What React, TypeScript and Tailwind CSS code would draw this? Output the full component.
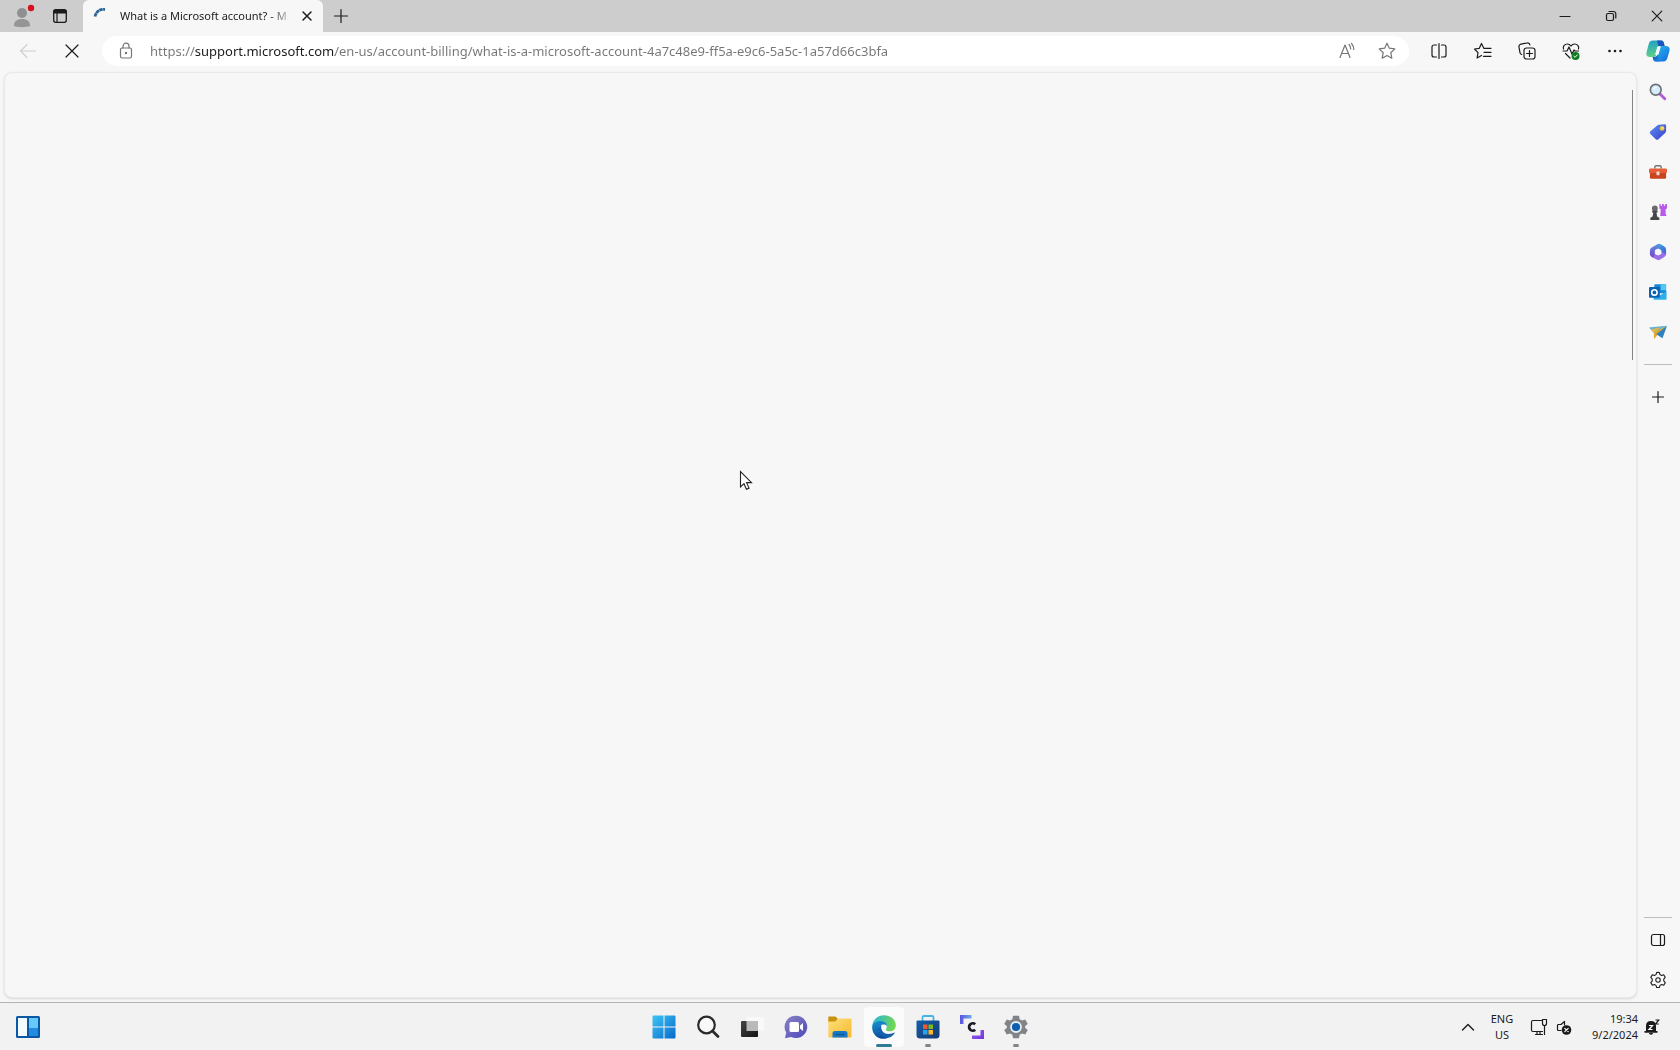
import React, { useState } from "react";

type IconProps = { className?: string; children: React.ReactNode; box?: number };

function Line({ className = "size-5", children, box = 20 }: IconProps) {
  return (
    <svg
      viewBox={`0 0 ${box} ${box}`}
      className={className}
      fill="none"
      stroke="currentColor"
      strokeWidth="1.2"
      strokeLinecap="round"
      strokeLinejoin="round"
      aria-hidden="true"
    >
      {children}
    </svg>
  );
}

function Art({ className = "size-5", children, box = 20 }: IconProps) {
  return (
    <svg viewBox={`0 0 ${box} ${box}`} className={className} fill="none" aria-hidden="true">
      {children}
    </svg>
  );
}

function Gradient({ id, from, to, x2 = 1, y2 = 1 }: { id: string; from: string; to: string; x2?: number; y2?: number }) {
  return (
    <linearGradient id={id} x1="0" y1="0" x2={x2} y2={y2}>
      <stop stopColor={from} />
      <stop offset="1" stopColor={to} />
    </linearGradient>
  );
}

function IconButton({ label, className, children }: { label: string; className: string; children: React.ReactNode }) {
  return (
    <button type="button" aria-label={label} className={`flex shrink-0 items-center justify-center ${className}`}>
      {children}
    </button>
  );
}

function TabStrip() {
  return (
    <header className="flex h-8 shrink-0 bg-[#cdcdcd] text-[#1b1b1b]">
      <div className="flex w-[83px] shrink-0 items-center rounded-br-md pl-2">
        <IconButton label="Profile" className="h-8 w-8">
          <Art className="size-6" box={24}>
            <circle cx="10" cy="9" r="5" fill="#8f8f8f" />
            <path d="M2 22c0-5 3-7 8-7s8 2 8 7c-3 1.500-13 1.500-16 0z" fill="#959595" />
            <circle cx="19" cy="4" r="3.200" fill="#d5101f" />
          </Art>
        </IconButton>
        <IconButton label="Tab actions" className="h-8 w-10">
          <Line className="size-4" box={16}>
            <rect x="1.700" y="1.700" width="12.600" height="12.600" rx="2" strokeWidth="1.300" />
            <path d="M2 2.500h12v2.500H2z" fill="currentColor" />
            <path d="M5 5v9" />
          </Line>
        </IconButton>
      </div>
      <div className="flex w-60 shrink-0 items-center rounded-t-md bg-[#f7f7f7] pl-2">
        <Art className="mr-2 size-5 shrink-0">
          <path d="M4 10.500Q6 2.700 14 3.500" stroke="#2b6496" strokeWidth="2.800" strokeDasharray="3.500 .4" />
        </Art>
        <span className="ml-px w-[175px] overflow-hidden text-[11px] leading-4 whitespace-nowrap [mask-image:linear-gradient(to_right,black_150px,transparent_174px)]">
          What is a Microsoft account? - M
        </span>
        <IconButton label="Close tab" className="h-8 w-6">
          <Line className="size-3" box={12}>
            <path d="M2 2l8 8M10 2l-8 8" strokeWidth="1.500" />
          </Line>
        </IconButton>
      </div>
      <IconButton label="New tab" className="h-8 w-9">
        <Line className="size-4" box={16}>
          <path d="M8 1.500v13M1.500 8h13" />
        </Line>
      </IconButton>
      <div className="ml-auto flex">
        <IconButton label="Minimize" className="h-8 w-[46px]">
          <Line className="size-3" box={12}>
            <path d="M1 6.500h10" />
          </Line>
        </IconButton>
        <IconButton label="Restore" className="h-8 w-[46px]">
          <Line className="size-3" box={12}>
            <rect x="1.500" y="3.500" width="7" height="7" rx="1.500" />
            <path d="M4 1.500h4.500a2.300 2.300 0 0 1 2.300 2.300V8" />
          </Line>
        </IconButton>
        <IconButton label="Close window" className="h-8 w-[46px]">
          <Line className="size-3" box={12}>
            <path d="M1.200 1.200l9.600 9.600M10.800 1.200l-9.600 9.600" />
          </Line>
        </IconButton>
      </div>
    </header>
  );
}

function Toolbar() {
  const [url, setUrl] = useState(
    "https://support.microsoft.com/en-us/account-billing/what-is-a-microsoft-account-4a7c48e9-ff5a-e9c6-5a5c-1a57d66c3bfa",
  );
  return (
    <div className="flex h-9 shrink-0 items-center pt-0.5 text-[#1b1b1b]">
      <IconButton label="Back" className="ml-1 h-8 w-12 text-[#d0d0d0]">
        <Line>
          <path d="M17.500 10h-15M9 3.500L2.500 10 9 16.500" />
        </Line>
      </IconButton>
      <IconButton label="Stop loading" className="h-8 w-10">
        <Line className="size-4" box={16}>
          <path d="M2 2l12 12M14 2L2 14" />
        </Line>
      </IconButton>
      <div className="ml-2.5 flex h-[30px] grow items-center rounded-full bg-white text-[#767676]">
        <IconButton label="View site information" className="h-7 w-12">
          <Line className="size-[18px]" box={18}>
            <rect x="3.500" y="6" width="11" height="10" rx="1.500" />
            <path d="M6 6V4.200a3 3 0 0 1 6 0V6" />
            <circle cx="9" cy="11" r=".6" fill="currentColor" />
          </Line>
        </IconButton>
        <input
          aria-label="Address bar"
          value={url}
          onChange={(e) => setUrl(e.target.value)}
          spellCheck={false}
          className="min-w-0 grow bg-[linear-gradient(to_right,#767676_45px,#1b1b1b_45px,#1b1b1b_185px,#767676_185px)] bg-clip-text text-[13px] leading-6 text-transparent outline-none"
        />
        <IconButton label="Read aloud" className="h-7 w-10">
          <Line>
            <path d="M3 16.500L8 4l5 12.500M4.700 12.500h6.600M12 3.500q1.700 1.800 1.700 4.500M14.500 2.500q2.300 2.500 2.300 6" />
          </Line>
        </IconButton>
        <IconButton label="Add to favorites" className="mr-0.5 h-7 w-10">
          <Line>
            <path d="M10 2.200l2.300 5 5.500.7-4 3.800 1 5.500-4.800-2.700-4.800 2.700 1-5.500-4-3.800 5.500-.7z" />
          </Line>
        </IconButton>
      </div>
      <div className="flex pl-2">
        <IconButton label="Split screen" className="h-8 w-11">
          <Line>
            <path d="M7.500 4H5a2 2 0 0 0-2 2v8a2 2 0 0 0 2 2h2.500M12.500 4H15a2 2 0 0 1 2 2v8a2 2 0 0 1-2 2h-2.500M10 2.500v15" />
          </Line>
        </IconButton>
        <IconButton label="Favorites" className="h-8 w-11">
          <Line>
            <path d="M11 7.300h-.2L8.500 2.500 6.300 7.300 1.500 8l3.500 3.700-.9 5.300 4.400-2.500M8.500 2.500l2.300 4.800H18M11 11.300h7M10.500 15.300H18" />
          </Line>
        </IconButton>
        <IconButton label="Collections" className="h-8 w-11">
          <Line>
            <rect x="7" y="7" width="11" height="11" rx="2.500" />
            <path d="M12.500 9.500v6M9.500 12.500h6M4.700 13.500A2.500 2.500 0 0 1 3 11.800L2 6.200a2.500 2.500 0 0 1 2-3l6.200-1.200a2.500 2.500 0 0 1 2.800 2" />
          </Line>
        </IconButton>
        <IconButton label="Browser essentials" className="h-8 w-11">
          <Line>
            <path d="M2.500 8C1.500 5 4 3 6.300 3S9.500 4.300 10 5c.5-.7 1.500-2 3.700-2S18.500 5 17.500 8M2 10h4l2-4 3 7 2-4 1 1h3.500M4.500 12.500L9 17" />
            <circle cx="14.500" cy="15" r="4" fill="#0e7a22" stroke="none" />
            <path d="M12.800 15.200l1.200 1.200 2.300-2.500" stroke="white" strokeWidth="1" />
          </Line>
        </IconButton>
        <IconButton label="Settings and more" className="h-8 w-11">
          <Line>
            <g fill="currentColor" stroke="none">
              <circle cx="4.500" cy="10" r="1.300" />
              <circle cx="10" cy="10" r="1.300" />
              <circle cx="15.500" cy="10" r="1.300" />
            </g>
          </Line>
        </IconButton>
      </div>
    </div>
  );
}

function CopilotIcon() {
  return (
    <Art className="size-6" box={24}>
      <defs>
        <Gradient id="cpa" from="#1f9fc4" to="#5fd08a" x2={0.1} />
        <Gradient id="cpb" from="#2cc0f0" to="#1368dc" />
        <Gradient id="cpc" from="#1c4fbe" to="#1d8fe9" />
      </defs>
      <path d="M7 1.500h8c2 0 2.500 1 3 3l.6 2.500h-3c-2 0-2.800 1-3.300 2.700L10.500 16c-.4 1.300-1 2-2.500 2H4c-3 0-4.200-2-3.400-5l2-7.500C3.300 2.500 4.500 1.500 7 1.500z" fill="url(#cpa)" />
      <path d="M11 1.500h4c2 0 2.500 1 3 3l.6 2.500h-3c-2 0-2.600.7-3 1.500z" fill="#1c55bd" />
      <path d="M17 22.500H10c-2 0-2.600-1-3-3l-.3-1.500h2c2 0 2.500-1 3-2.700L13.500 9c.5-1.500 1.300-2 2.700-2H20c3 0 4.200 2 3.400 5l-2 7c-.8 2.500-2 3.500-4.400 3.500z" fill="url(#cpb)" />
      <path d="M6.700 18h2c2 0 2.500-1 3-2.700l.6 3.700c.3 2 1 3.500 2.700 3.500h-5c-2 0-2.800-1.500-3.300-4.500z" fill="url(#cpc)" />
      <path d="M11.800 7.800h2.400l-2.200 7.700H9.600z" fill="#f3fbff" stroke="#f3fbff" strokeWidth="1" strokeLinejoin="round" />
    </Art>
  );
}

const sidebarApps: { label: string; icon: React.ReactNode }[] = [
  {
    label: "Search",
    icon: (
      <Art className="size-[18px]">
        <path d="M12.500 12.500l5 5" stroke="#b35bd6" strokeWidth="3.200" strokeLinecap="round" />
        <circle cx="7.500" cy="7.500" r="6" fill="#d3edfb" stroke="#6c7075" strokeWidth="1.800" />
        <path d="M5 7q1-2.500 3.500-2.500" stroke="white" strokeWidth="1.300" />
      </Art>
    ),
  },
  {
    label: "Shopping",
    icon: (
      <Art className="size-[18px]">
        <defs><Gradient id="tag" from="#5a8df5" to="#3b42c9" /></defs>
        <path d="M11 2l6.500-.5Q19 1.500 19 3v6q0 1-.8 1.800L10.500 18q-1.500 1.300-3 0l-6-5.700q-1.300-1.500 0-3L9.500 2.600Q10 2 11 2z" fill="url(#tag)" />
        <circle cx="14.500" cy="6" r="2.700" fill="#e5c04b" />
        <circle cx="15" cy="5.500" r="1" fill="#fff3ac" />
      </Art>
    ),
  },
  {
    label: "Tools",
    icon: (
      <Art className="size-[18px]">
        <path d="M6.500 6V4.500Q6.500 3 8 3h4q1.500 0 1.500 1.500V6" stroke="#70777c" strokeWidth="1.600" />
        <rect x="0" y="6" width="20" height="5.500" rx="1.500" fill="#e55e36" />
        <path d="M1 11h18v5q0 1.500-1.500 1.500h-15Q1 17.500 1 16z" fill="#c9451f" />
        <rect x="8.300" y="9.500" width="3.400" height="4" rx=".8" fill="#e8ddd6" />
      </Art>
    ),
  },
  {
    label: "Games",
    icon: (
      <Art className="size-[18px]">
        <path d="M11.500 1H13v2h1.500V1h2v2H18V1h2v5l-1.500 1v5l1 2.500h-7L13 7l-1.500-1z" fill="#b85be6" />
        <circle cx="6.500" cy="6" r="3.200" fill="#6a6a6e" />
        <path d="M3.500 8.500h6v2H8.300L9 15l2.500 1.500V19h-10v-2.500L4 15l.8-4.500H3.500z" fill="#46464a" />
      </Art>
    ),
  },
  {
    label: "Microsoft 365",
    icon: (
      <Art className="size-[18px]">
        <defs>
          <Gradient id="ma" from="#3cb5e8" to="#4457cf" />
          <Gradient id="mb" from="#5f8fd9" to="#7a45cf" y2={1} x2={0} />
        </defs>
        <path d="M10 1q1.500-.5 3 .5l4 2.500Q19 5.200 19 7.500v5.700L13.700 10V8L10 6 6.500 8z" fill="url(#ma)" />
        <path d="M10 1L3 5Q1 6.300 1 8.500V12q0 2.500 2 3.500l1.500.8L6.500 15V8l4-2.700z" fill="url(#mb)" />
        <path d="M4 16l5 2.500q1.500.8 3 0l5-3q2-1 2-3.500l-5.300-1.800v2L10 14l-3.500-2v3z" fill="#9a6fe6" />
        <circle cx="10" cy="10" r="3.300" fill="#f4f6ff" />
      </Art>
    ),
  },
  {
    label: "Outlook",
    icon: (
      <Art className="size-[18px]">
        <rect x="6" y="1.500" width="13" height="10" rx="1" fill="#1789d4" />
        <path d="M13 1.500h6V8h-6z" fill="#52c8f3" />
        <path d="M5 9l7.500 4.500L19.500 9v8.500q0 1-1 1H6q-1 0-1-1z" fill="#2faee9" />
        <rect x="0" y="4.500" width="12" height="12" rx="1.200" fill="#0862b5" />
        <circle cx="6" cy="10.500" r="3" stroke="white" strokeWidth="1.800" />
      </Art>
    ),
  },
  {
    label: "Drop",
    icon: (
      <Art className="size-[18px]">
        <path d="M0 5L20 3 5.500 11z" fill="#5aaee0" />
        <path d="M20 3L5.500 10.500V18l3.500-4.500z" fill="#e3a629" />
        <path d="M20 3L8 12.500l7 4.500z" fill="#2f82c2" />
        <path d="M2 7l12-2.500L5.500 11z" fill="#dfb648" />
      </Art>
    ),
  },
];

const gearPath =
  "M10 1.500l1.500.2.700 2.300 1.800 1 2.300-.8 1.700 2.800L16.400 9v2l1.700 1.900-1.700 2.900-2.400-.8-1.800 1-.7 2.300h-3L7.800 16 6 15l-2.300.8-1.700-2.900L3.600 11V9L2 7.100l1.700-2.900L6 5l1.800-1 .7-2.300z";

function Sidebar() {
  return (
    <aside aria-label="Sidebar" className="flex w-[43px] shrink-0 flex-col items-center pr-0.5 text-[#1b1b1b]">
      <IconButton label="Copilot" className="h-10 w-10 pb-0.5">
        <CopilotIcon />
      </IconButton>
      {sidebarApps.map((app) => (
        <IconButton key={app.label} label={app.label} className="h-10 w-10">
          {app.icon}
        </IconButton>
      ))}
      <hr className="mt-3 w-7 border-[#bdbdbd]" />
      <IconButton label="Customize" className="mt-3 h-10 w-10">
        <Line className="size-4" box={16}>
          <path d="M8 2.500v11M2.500 8h11" />
        </Line>
      </IconButton>
      <hr className="mt-auto w-7 border-[#bdbdbd]" />
      <IconButton label="Hide sidebar" className="mt-0.5 h-10 w-10">
        <Line className="size-4" box={16}>
          <rect x="1.500" y="2.500" width="13" height="11" rx="2" />
          <path d="M10.500 2.500v11" />
        </Line>
      </IconButton>
      <IconButton label="Sidebar settings" className="mb-0.5 h-10 w-10">
        <Line className="size-[18px]">
          <path d={gearPath} />
          <circle cx="10" cy="10" r="2.500" />
        </Line>
      </IconButton>
    </aside>
  );
}

type TaskApp = { label: string; state?: "active" | "open"; icon: React.ReactNode };

const taskApps: TaskApp[] = [
  {
    label: "Start",
    icon: (
      <Art className="size-6" box={24}>
        <defs><Gradient id="win" from="#3ec5f7" to="#0869c9" /></defs>
        <path d="M1.500.5H11.500V11.500H.5V1.500Q.5.5 1.500.5zM12.500.5h10q1 0 1 1v10h-11zM.5 12.500h11v11h-10q-1 0-1-1zM12.500 12.500h11v10q0 1-1 1h-10z" fill="url(#win)" />
      </Art>
    ),
  },
  {
    label: "Search",
    icon: (
      <Art className="size-6" box={24}>
        <circle cx="10.500" cy="10" r="8.300" fill="#f8f8f8" stroke="#2a2a2a" strokeWidth="2.200" />
        <path d="M16.500 16l5.500 5.500" stroke="#2a2a2a" strokeWidth="2.800" strokeLinecap="round" />
      </Art>
    ),
  },
  {
    label: "Task view",
    icon: (
      <Art className="size-6" box={24}>
        <defs><Gradient id="tv" from="#444" to="#151515" /></defs>
        <rect x="6" y="2" width="18" height="14" rx="1" fill="#f9f9f9" />
        <rect x="1" y="6" width="17" height="16" rx="1" fill="url(#tv)" />
        <path d="M6.500 6H18v10H6.500z" fill="#b9b9b9" />
      </Art>
    ),
  },
  {
    label: "Chat",
    icon: (
      <Art className="size-6" box={24}>
        <defs><Gradient id="chat" from="#8a83c4" to="#4d49bb" /></defs>
        <path d="M12 .7a11.200 11.200 0 1 1-4.800 21.300L1 23.300l1.200-5.700A11.200 11.200 0 0 1 12 .7z" fill="url(#chat)" />
        <rect x="5.500" y="7" width="9.500" height="10" rx="1.500" fill="white" />
        <path d="M16 10.500l3-2.500v8l-3-2.500z" fill="white" />
      </Art>
    ),
  },
  {
    label: "File Explorer",
    icon: (
      <Art className="size-6" box={24}>
        <defs><Gradient id="fold" from="#fee07c" to="#f5b92e" /></defs>
        <path d="M1 1.500h6.500L10 4v4H.3V2.500Q.3 1.500 1 1.500z" fill="#c8920e" />
        <path d="M.3 6.500h7L10 3.500h12.500q1 0 1 1v17q0 1-1 1H1.300q-1 0-1-1z" fill="url(#fold)" />
        <path d="M4.500 22.500v-4.300Q4.500 16 7 16h10q2.500 0 2.500 2.200v4.300z" fill="#1678c4" />
        <path d="M7.500 19.500h9" stroke="#0f5695" strokeWidth="1.500" />
      </Art>
    ),
  },
  {
    label: "Microsoft Edge",
    state: "active",
    icon: (
      <Art className="size-6" box={24}>
        <defs>
          <Gradient id="eda" from="#24b4e5" to="#70d654" y2={0.2} />
          <Gradient id="edb" from="#1793d2" to="#0b4e9c" x2={0.2} />
        </defs>
        <path d="M.2 11C1 4.500 6 .2 12 .2c7 0 11.800 4.700 11.800 10 0 4-2.800 6-6 6-2.700 0-4-1-4-1.800 0-.6 1-1.100 1-3 0-2.400-2.500-4.600-6-4.600C4.800 6.800 1.500 8.500.2 11z" fill="url(#eda)" />
        <path d="M.2 11.500C.5 8.500 4 6 8 6c4.500 0 7 2.500 7 5-1-1.200-2.200-1.500-3.500-1.500C8 9.500 6 12.500 7.500 16c1.300 3 5 6 10 5.500-1.500 1.500-3.500 2.300-5.800 2.300C4.500 23.800-.3 18 .2 11.500z" fill="url(#edb)" />
        <path d="M9.500 10c-1.500 4 1.500 9 7 9 2.500 0 4.500-.8 5.800-1.500.4-.1.600.2.400.6-1.500 2.800-3.700 3.900-5.200 4.400-5 .9-9-2.500-10.200-6C6 13 7.500 10.800 9.500 10z" fill="#1560ae" />
      </Art>
    ),
  },
  {
    label: "Microsoft Store",
    state: "open",
    icon: (
      <Art className="size-6" box={24}>
        <defs><Gradient id="store" from="#155fa8" to="#133a71" /></defs>
        <path d="M6.500 6V2.500q0-1.500 1.500-1.500h8q1.500 0 1.500 1.500V6" stroke="#47b4e6" strokeWidth="1.800" />
        <path d="M1.500 5.500h21q1 0 1 1V20q0 3.500-3.500 3.500H4Q.5 23.500.5 20V6.500q0-1 1-1z" fill="url(#store)" />
        <path d="M7 9.500h4.500V14H7z" fill="#f0562c" />
        <path d="M12.500 9.500H17V14h-4.500z" fill="#7eba1d" />
        <path d="M7 15h4.500v4.500H7z" fill="#2ba3eb" />
        <path d="M12.500 15H17v4.500h-4.500z" fill="#fdb923" />
      </Art>
    ),
  },
  {
    label: "Clipchamp",
    icon: (
      <Art className="size-6" box={24}>
        <defs>
          <Gradient id="cla" from="#5a55df" to="#6fa9ee" y2={0} />
          <Gradient id="clb" from="#a15cf0" to="#6a38dc" />
        </defs>
        <path d="M0 0h11.500v3.500h-8V9H0z" fill="url(#cla)" />
        <path d="M24 24H12v-3.500h8.500V15H24z" fill="url(#clb)" />
        <path d="M15.200 9.200a3.700 3.700 0 1 0 0 5.600" stroke="#1a1a2a" strokeWidth="2.700" />
      </Art>
    ),
  },
  {
    label: "Settings",
    state: "open",
    icon: (
      <Art className="size-6" box={24}>
        <path
          d="M9 .8h6l.6 3.400 2.400 1.400 3.200-1.200 2.600 4.600L21.200 11v2l2.600 2-2.600 4.600-3.200-1.200-2.400 1.400-.6 3.400H9l-.6-3.400L6 18.400l-3.200 1.200L.2 15l2.600-2v-2L.2 9l2.600-4.600L6 5.600l2.400-1.400z"
          fill="#808387"
        />
        <circle cx="12" cy="12" r="5" fill="#0f5eaf" stroke="#e6f1f8" strokeWidth="1.800" />
      </Art>
    ),
  },
];

function Taskbar() {
  return (
    <footer className="grid h-12 shrink-0 grid-cols-[1fr_auto_1fr] items-center border-t border-[#b4b4b4] bg-[#f2f2f2] text-[#1b1b1b]">
      <IconButton label="Widgets" className="ml-2 h-10 w-10">
        <Art className="size-6" box={24}>
          <rect x="0" y="1" width="24" height="22" rx="1.500" fill="#0b58a5" />
          <path d="M2 3h9v18H2z" fill="#f3fcff" />
          <path d="M13 3h9v10h-9z" fill="#67c9f8" />
          <path d="M13 13h9v8h-9z" fill="#228ce2" />
        </Art>
      </IconButton>
      <nav aria-label="Taskbar" className="flex gap-1">
        {taskApps.map((app) => (
          <button
            key={app.label}
            type="button"
            aria-label={app.label}
            className={`relative flex h-10 w-10 items-center justify-center rounded ${app.state === "active" ? "bg-[#fbfbfb]" : ""}`}
          >
            {app.icon}
            {app.state === "active" && <span className="absolute bottom-0 h-[3px] w-4 rounded-full bg-[#2d7c93]" />}
            {app.state === "open" && <span className="absolute bottom-0 h-[3px] w-1.5 rounded-full bg-[#858585]" />}
          </button>
        ))}
      </nav>
      <div className="flex items-center justify-self-end pr-[18px] text-[11px] leading-4">
        <IconButton label="Show hidden icons" className="h-10 w-8">
          <Line className="size-4" box={16}>
            <path d="M2.500 11L8 5.500l5.500 5.500" strokeWidth="1.400" />
          </Line>
        </IconButton>
        <button type="button" className="h-10 w-9 text-center">
          ENG
          <br />
          US
        </button>
        <button type="button" aria-label="Network and volume" className="flex h-10 w-[62px] items-center justify-center gap-2">
          <Line className="size-[18px]" box={18}>
            <path d="M11.500 2.500H3A1.500 1.500 0 0 0 1.500 4v8A1.500 1.500 0 0 0 3 13.500h9.500M5.500 16.500h7M7 13.500v3M10 13.500v3M14.500 7.500v9M12.500 1.500h4v4a2 2 0 0 1-4 0z" />
          </Line>
          <Line className="size-4" box={16}>
            <path d="M5 11.500H2.500a1 1 0 0 1-1-1v-4a1 1 0 0 1 1-1H5l3.500-3V6" />
            <circle cx="10.500" cy="11" r="4.800" fill="currentColor" stroke="none" />
            <path d="M8.800 9.300l3.400 3.400M12.200 9.300l-3.400 3.400" stroke="white" />
          </Line>
        </button>
        <button type="button" className="h-10 w-14 text-right whitespace-nowrap">
          19:34
          <br />
          9/2/2024
        </button>
        <IconButton label="Notifications" className="ml-1 h-10 w-5">
          <Art className="size-4" box={16}>
            <path d="M2 12V7Q2 2 7 2q5 0 5 5v5h1.500v1.700H.5V12z" fill="#1b1b1b" />
            <path d="M5 14h4q0 1.800-2 1.800T5 14z" fill="#1b1b1b" />
            <path d="M5 6.500h3.500L5 10.500h3.500" stroke="white" strokeWidth="1.200" />
            <path d="M10.500 0H16v6h-3z" fill="#f2f2f2" />
            <path d="M11.500 1h3.300l-3.300 4h3.300" stroke="#1b1b1b" strokeWidth="1.200" />
          </Art>
        </IconButton>
      </div>
    </footer>
  );
}

function MousePointer() {
  return (
    <svg viewBox="0 0 14 21" className="absolute top-[43%] left-[45%] h-[21px] w-3.5" aria-hidden="true">
      <path d="M1.500 1.500v15.500l3.500-3.300 2.400 5.500 2.600-1.100-2.400-5.500h4.900z" fill="white" stroke="#222" strokeWidth="1.100" />
    </svg>
  );
}

export default function App() {
  return (
    <div className="flex h-screen flex-col overflow-hidden bg-[#f7f7f7] font-['Noto_Sans','Open_Sans',sans-serif]">
      <TabStrip />
      <div className="flex min-h-0 grow">
        <div className="flex min-w-0 grow flex-col">
          <Toolbar />
          <main className="relative mt-1 mb-1 ml-1 flex grow justify-end rounded-lg border border-[#e9e9e9] bg-[#f7f7f7] shadow-sm">
            <div className="mt-[17px] mr-[3px] h-[270px] w-px bg-[#858585]" />
            <MousePointer />
          </main>
        </div>
        <Sidebar />
      </div>
      <Taskbar />
    </div>
  );
}
